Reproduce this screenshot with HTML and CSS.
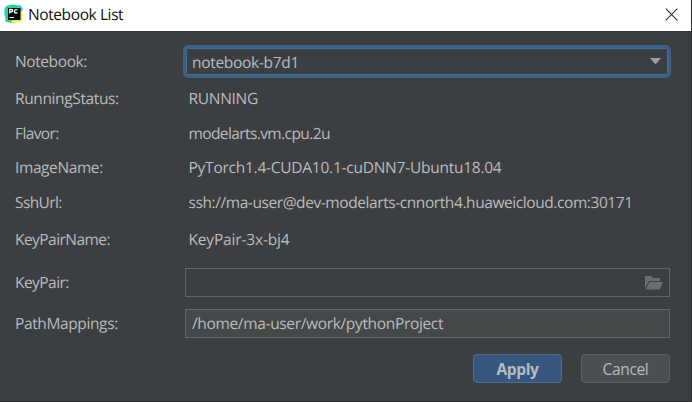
FILE: index.html
```html
<!DOCTYPE html>
<html lang="en">
<head>
<meta charset="utf-8">
<title>Notebook List</title>
<link rel="stylesheet" href="styles.css">
</head>
<body>
<div class="dialog">
  <header class="titlebar">
    <svg class="logo" width="20" height="20" viewBox="0 0 20 20">
      <path fill="#21d789" d="M.500 5 2 2l6-1.500 7 1L17 16l-8 3-4-.5-3.500-1z"/>
      <path fill="#2cc8e8" d="M13 2l3.500-1L19 5l-2 4-4-3zM.5 5l2-1v7l-2 1z"/>
      <path fill="#eef53b" d="M16 7l3 3-1.500 8.500-5-1L8 19.500l-1-3 9-1z"/>
      <path fill="#000" d="M4 4h12.500v12H4z"/>
      <path fill="none" stroke="#fff" stroke-width="1.300" d="M5.800 9.500V5.500h1.600q1.300 0 1.300 1.200T7.400 7.900H6M13.500 6q-3-1.200-3 1.300t3 1.300"/>
      <path fill="#fff" d="M5.500 13h4.500v1H5.500z"/>
    </svg>
    <h1 class="title">Notebook List</h1>
    <svg class="close" width="13" height="13" viewBox="0 0 13 13"><path d="M.7.700 12.300 12.300M12.300.700.700 12.300"/></svg>
  </header>
  <main class="form">
    <div class="label">Notebook:</div>
    <div class="select"><span class="t-notebook">notebook-b7d1</span><svg width="11" height="7" viewBox="0 0 11 7"><path fill="#9a9da0" d="M0 0h11L5.500 6.500z"/></svg></div>
    <div class="label l-status">RunningStatus:</div><div class="value v-status">RUNNING</div>
    <div class="label l-flavor">Flavor:</div><div class="value v-flavor">modelarts.vm.cpu.2u</div>
    <div class="label l-image">ImageName:</div><div class="value v-image">PyTorch1.4-CUDA10.1-cuDNN7-Ubuntu18.04</div>
    <div class="label l-ssh">SshUrl:</div><div class="value v-ssh">ssh://ma-user@dev-modelarts-cnnorth4.huaweicloud.com:30171</div>
    <div class="label l-name">KeyPairName:</div><div class="value v-name">KeyPair-3x-bj4</div>
    <div class="label l-pair">KeyPair:</div>
    <div class="field browse"><svg width="18" height="14" viewBox="0 0 18 14"><path fill="#667073" d="M0 0h6l2 2h7v3H4L0 12zM4.500 6H18l-3.500 7.500H.5z"/></svg></div>
    <div class="label l-path">PathMappings:</div>
    <div class="field path"><span class="t-path">/home/ma-user/work/pythonProject</span></div>
  </main>
  <footer class="actions">
    <button class="button primary">Apply</button>
    <button class="button">Cancel</button>
  </footer>
</div>
</body>
</html>
```
FILE: styles.css
```css
* { box-sizing: border-box; }
body { margin: 0; background: #3c3f41; font-family: "Open Sans", "Noto Sans", sans-serif; font-size: 15.5px; color: #bbb; text-rendering: geometricPrecision; }
.dialog { height: 402px; display: flex; flex-direction: column; border-right: 1px solid #2b2c2e; border-bottom: 1px solid #2b2c2e; overflow: hidden; }
.titlebar { height: 31px; flex: none; display: flex; align-items: center; background: #fff; padding: 0 13px 3px 4px; }
.logo { flex: none; }
.title { margin: 0 auto 0 4px; font-size: 15.5px; font-weight: 400; color: #111; line-height: 20px; letter-spacing: -.4px; padding-bottom: 1px; }
.close { fill: none; stroke: #333; stroke-width: 1.1; }
.form { display: grid; grid-template-columns: 169px 487px; grid-template-rows: 33px 42px 27px 42px 27px 48px 37px 45px; padding: 13px 0 0 15px; align-items: center; white-space: nowrap; border-top: 1px solid #303234; }
.label { letter-spacing: -.4px; padding-bottom: 2px; }
.l-status, .l-path { letter-spacing: -.38px; }
.l-flavor, .l-ssh { letter-spacing: -.6px; }
.l-name, .l-pair { letter-spacing: -.55px; }
.value { padding: 0 0 2px 4.500px; }
.t-notebook, .v-status { letter-spacing: -.3px; }
.v-flavor { letter-spacing: -.6px; }
.v-image { letter-spacing: -.25px; }
.v-ssh { letter-spacing: -.42px; }
.v-name { letter-spacing: -.17px; }
.t-path { letter-spacing: -.34px; padding-bottom: 2px; }
.select { height: 33px; width: 488px; margin-left: -1px; border: 3px solid #3d6185; border-radius: 5px; display: flex; align-items: center; justify-content: space-between; padding: 0 7px 0 6px; box-shadow: inset 0 0 0 1px #466d94; }
.field { height: 29px; width: 485px; margin-left: 1px; border: 1px solid #646464; display: flex; align-items: center; padding: 0 6px; }
.browse { justify-content: flex-end; }
.path { background: #45494a; }
.actions { display: flex; justify-content: flex-end; gap: 19px; padding: 8px 21px 0 0; }
.button { width: 89px; height: 29px; padding: 0; font: 15.5px "Open Sans", sans-serif; letter-spacing: -.35px; color: #bbb; background: #4c5052; border: 1px solid #5e6060; border-radius: 4px; }
.primary { background: #365880; border-color: #4c708c; font-weight: 700; }
```
